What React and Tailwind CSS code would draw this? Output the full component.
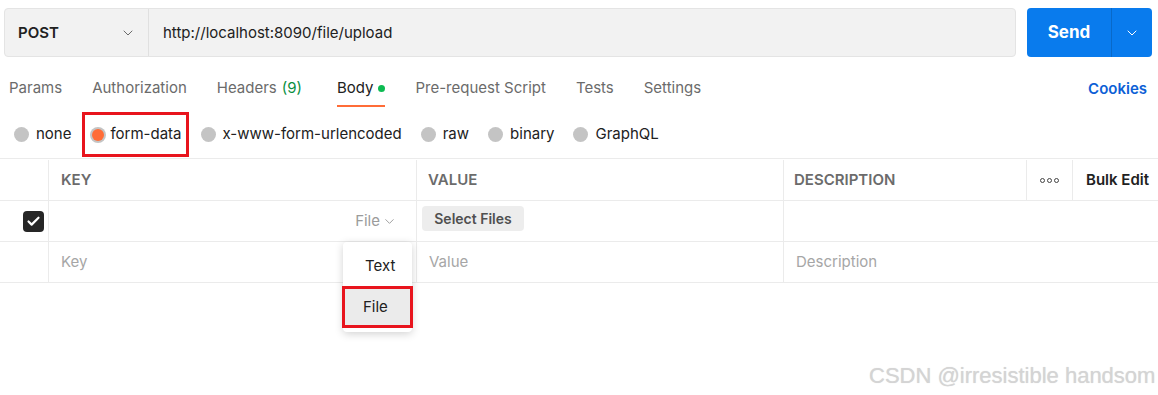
import React from 'react';
import { ChevronDown, Check } from 'lucide-react';

const tabs = [
  { label: 'Params' },
  { label: 'Authorization' },
  { label: 'Headers', count: '(9)' },
  { label: 'Body', active: true, dot: true },
  { label: 'Pre-request Script' },
  { label: 'Tests' },
  { label: 'Settings' },
];

const bodyTypes = ['none', 'form-data', 'x-www-form-urlencoded', 'raw', 'binary', 'GraphQL'];

const Radio = ({ label, selected }) => (
  <div
    className={
      selected
        ? 'flex items-center gap-[4px] h-[45px] -ml-[8px] -mr-[7px] pl-[5px] pr-[4px] border-[3px] border-[#e8141d]'
        : 'flex items-center gap-[7px] h-[45px]'
    }
  >
    {selected ? (
      <span className="w-[16px] h-[16px] rounded-full bg-[#c4c4c4] flex items-center justify-center">
        <span className="w-[12px] h-[12px] rounded-full bg-[#ff6c37]" />
      </span>
    ) : (
      <span className="w-[15px] h-[15px] rounded-full bg-[#c4c4c4]" />
    )}
    <span className="text-[15px] text-[#212121]">{label}</span>
  </div>
);

export default function App() {
  return (
    <div
      className="relative w-[1158px] h-[395px] bg-white overflow-hidden text-[#212121]"
      style={{ fontFamily: 'Inter, "Open Sans", sans-serif' }}
    >
      {/* url bar */}
      <div className="flex items-stretch gap-[11px] pt-[8px] pl-[4px] pr-[6px] h-[57px]">
        <div className="flex flex-1 items-stretch bg-[#f2f2f2] border border-[#e4e4e4] rounded-[4px]">
          <div className="flex items-center justify-between w-[144px] pl-[13px] pr-[12px] pt-[1px] border-r border-[#e0e0e0]">
            <span className="text-[15px] font-semibold text-[#212121]">POST</span>
            <ChevronDown size={16} strokeWidth={1.5} className="text-[#6b6b6b]" />
          </div>
          <div className="flex items-center pl-[14px] pt-[1px] text-[15px] text-[#212121]">
            http://localhost:8090/file/upload
          </div>
        </div>
        <div className="flex w-[125px] bg-[#097bed] rounded-[4px] text-white">
          <div className="flex flex-1 items-center justify-center pt-[1px] border-r border-[#0869c9] text-[17px] font-bold">
            Send
          </div>
          <div className="flex items-center justify-center w-[40px]">
            <ChevronDown size={16} strokeWidth={1.5} />
          </div>
        </div>
      </div>

      {/* tabs */}
      <div className="flex items-stretch justify-between h-[50px] pl-[9px] pr-[11px]">
        <div className="flex items-stretch gap-[30px]">
          {tabs.map((t) => (
            <div
              key={t.label}
              className={
                t.active
                  ? 'flex items-center gap-[5px] ml-[5px] pt-[14px] border-b-2 border-[#ff6c37] text-[15px] text-[#212121]'
                  : 'flex items-center gap-[5px] pt-[14px] border-b-2 border-transparent text-[15px] text-[#6b6b6b]'
              }
            >
              <span>{t.label}</span>
              {t.count && <span className="text-[#0b8f3f]">{t.count}</span>}
              {t.dot && <span className="w-[7px] h-[7px] rounded-full bg-[#0cbb52]" />}
            </div>
          ))}
        </div>
        <div className="flex items-center pt-[14px] text-[15px] font-semibold text-[#0d5fd6]">Cookies</div>
      </div>

      {/* body types */}
      <div className="flex items-center gap-[19px] h-[51px] pl-[14px] pt-[5px] pb-[1px]">
        {bodyTypes.map((b) => (
          <Radio key={b} label={b} selected={b === 'form-data'} />
        ))}
      </div>

      {/* table */}
      <div className="border-t border-[#ebebeb] text-[15px]">
        <div className="flex h-[42px] pt-[1px] border-b border-[#ebebeb] font-semibold">
          <div className="w-[49px] border-r border-[#ebebeb]" />
          <div className="flex items-center w-[368px] pl-[12px] border-r border-[#ebebeb] text-[#6b6b6b]">KEY</div>
          <div className="flex items-center w-[367px] pl-[11px] border-r border-[#ebebeb] text-[#6b6b6b]">VALUE</div>
          <div className="flex items-center w-[243px] pl-[10px] border-r border-[#ebebeb] text-[#6b6b6b]">DESCRIPTION</div>
          <div className="flex items-center justify-center w-[46px] border-r border-[#ebebeb] gap-[2px]">
            <span className="w-[5px] h-[5px] rounded-full border border-[#444]" />
            <span className="w-[5px] h-[5px] rounded-full border border-[#444]" />
            <span className="w-[5px] h-[5px] rounded-full border border-[#444]" />
          </div>
          <div className="flex items-center flex-1 pl-[13px] text-[#212121]">Bulk Edit</div>
        </div>

        <div className="flex h-[41px] border-b border-[#ebebeb]">
          <div className="flex items-center justify-end w-[49px] pr-[4px] border-r border-[#ebebeb]">
            <span className="flex items-center justify-center w-[21px] h-[21px] rounded-[4px] bg-[#262626]">
              <Check size={15} strokeWidth={3.5} className="text-white" />
            </span>
          </div>
          <div className="flex items-center justify-end w-[368px] pr-[19px] border-r border-[#ebebeb] text-[#9b9b9b]">
            <span>File</span>
            <ChevronDown size={15} strokeWidth={1.5} className="ml-[2px]" />
          </div>
          <div className="flex items-start w-[367px] pl-[5px] pt-[5px] border-r border-[#ebebeb]">
            <span className="flex items-center justify-center w-[102px] h-[25px] rounded-[4px] bg-[#ededed] text-[14px] font-semibold text-[#505050]">
              Select Files
            </span>
          </div>
          <div className="flex-1" />
        </div>

        <div className="flex h-[41px] border-b border-[#ebebeb] text-[#a6a6a6]">
          <div className="w-[49px] border-r border-[#ebebeb]" />
          <div className="flex items-center w-[368px] pl-[12px] border-r border-[#ebebeb]">Key</div>
          <div className="flex items-center w-[367px] pl-[12px] border-r border-[#ebebeb]">Value</div>
          <div className="flex items-center flex-1 pl-[12px]">Description</div>
        </div>
      </div>

      {/* type menu */}
      <div className="absolute left-[343px] top-[242px] w-[69px] pt-[4px] pb-[4px] bg-white rounded-[4px] shadow-[0_2px_8px_rgba(0,0,0,0.18)] text-[15px] text-[#212121]">
        <div className="flex items-center h-[40px] pl-[22px]">Text</div>
        <div className="flex items-center h-[42px] pl-[18px] bg-[#ebebeb] border-[3px] border-[#e8141d] -mx-[1px]">File</div>
      </div>

      {/* watermark */}
      <div
        className="absolute left-[869px] top-[359px] text-[22px] text-[#d4d4d4] [text-shadow:0_0_1px_rgba(0,0,0,0.15)]"
        style={{ fontFamily: '"Liberation Sans", Arial, sans-serif' }}
      >
        CSDN @irresistible handsom
      </div>
    </div>
  );
}
